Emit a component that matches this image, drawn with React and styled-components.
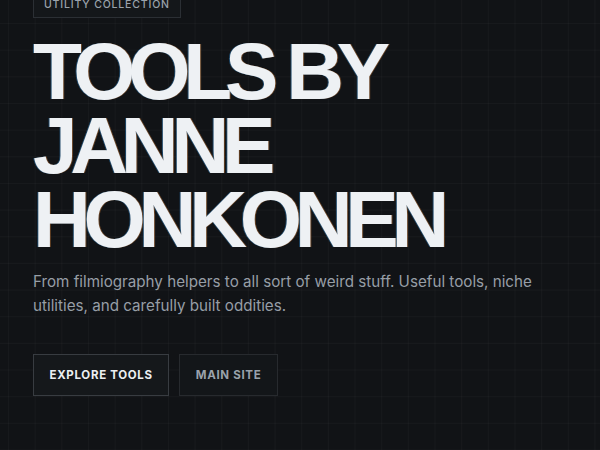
import styled, { createGlobalStyle } from "styled-components";

const GlobalStyle = createGlobalStyle`
html, body {
    margin: 0;
    padding: 0;
    background: #111316;
}
body {
    font-family: Inter, "Noto Sans", sans-serif;
    overflow: hidden;
}
`;

const Page = styled.div`
width: 600px;
height: 450px;
box-sizing: border-box;
padding: 0 33px;
background-color: #111316;
background-image:
    linear-gradient(rgba(255,255,255,0.028) 1px, transparent 1px),
    linear-gradient(90deg, rgba(255,255,255,0.028) 1px, transparent 1px);
background-size: 26.67px 26.67px;
background-position: 8px 23px;
overflow: hidden;
`;

const Hero = styled.section`
display: flex;
flex-direction: column;
align-items: flex-start;
margin-top: -8px;
`;

const Badge = styled.span`
display: inline-block;
padding: 6px 10px 5px;
border: 1px solid #2b2f34;
background: #14171a;
color: #9aa2ab;
font-size: 10.5px;
font-weight: 500;
letter-spacing: 0.08em;
text-transform: uppercase;
line-height: 1.2;
`;

const Title = styled.h1`
margin: 17px 0 0;
color: #eef1f4;
font-family: "Liberation Sans", Arial, sans-serif;
font-size: 80px;
font-weight: 700;
line-height: 74px;
letter-spacing: -0.09em;
text-transform: uppercase;
text-shadow: -1px 0 rgba(56, 170, 255, 0.35), 1px 0 rgba(255, 150, 60, 0.35);
`;

const Lead = styled.p`
margin: 13px 0 0;
max-width: 535px;
color: #979ea6;
font-size: 15.2px;
line-height: 24px;
`;

const Actions = styled.div`
display: flex;
gap: 10px;
margin-top: 36px;
`;

const Button = styled.a`
display: inline-flex;
align-items: center;
height: 42px;
box-sizing: border-box;
padding: 0 15.5px;
border: 1px solid ${p => p.$primary ? "#383c41" : "#272a2e"};
background: ${p => p.$primary ? "#15181b" : "#131619"};
color: ${p => p.$primary ? "#eceff2" : "#9aa2ab"};
font-size: 11.5px;
font-weight: 700;
letter-spacing: 0.06em;
text-transform: uppercase;
text-decoration: none;
`;

export default function App() {
    return (
        <>
        <GlobalStyle />
        <Page>
            <Hero>
                <Badge>Utility Collection</Badge>
                <Title>Tools by<br />Janne<br />Honkonen</Title>
                <Lead>
                    From filmiography helpers to all sort of weird stuff. Useful tools, niche utilities, and carefully built oddities.
                </Lead>
                <Actions>
                    <Button href="#tools" $primary>Explore tools</Button>
                    <Button href="#main">Main site</Button>
                </Actions>
            </Hero>
        </Page>
        </>
    );
}
